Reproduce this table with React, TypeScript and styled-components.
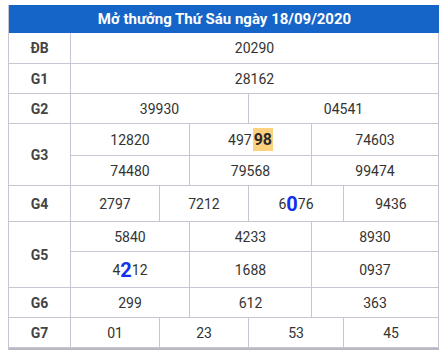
import styled, { createGlobalStyle } from 'styled-components';

const GlobalStyle = createGlobalStyle`
body {
	margin: 5px 9px 0 8px;
	background: #fff;
	font-family: Roboto, 'Liberation Sans', sans-serif;
}
`;

const ResultTable = styled.div`
display: grid;
grid-template-columns: 62px 89px 30px 59px 63px 32px 95px;
grid-template-rows: 28px 31px 30px 30px 32px 30px 36px 30px 36px 30px 30px;
width: 431px;
box-sizing: border-box;
border-left: 1px solid #c6c6d2;
border-bottom: 2px solid #b9b9c4;
`;

const Title = styled.div`
grid-column: 1 / -1;
display: flex;
align-items: center;
justify-content: center;
background: #1564c8;
color: #fff;
font-size: 15px;
font-weight: 700;
margin-right: -1px;
`;

const Cell = styled.div<{ $span: number; $rows?: number }>`
grid-column: span ${p => p.$span};
grid-row: span ${p => p.$rows ?? 1};
display: flex;
align-items: center;
justify-content: center;
box-sizing: border-box;
border-right: 1px solid #c6c6d2;
border-bottom: 1px solid #c6c6d2;
color: #333;
font-size: 14px;
`;

const Label = styled(Cell)`
font-weight: 700;
color: #444;
font-size: 14px;
`;

const Marked = styled.span`
display: inline-block;
padding: 2px 1px;
margin-left: 1px;
background: #fdd27e;
color: #2a2a2a;
font-weight: 700;
font-size: 16px;
line-height: 19px;
`;

const BigDigit = styled.span`
color: #1230f0;
font-weight: 700;
font-size: 20px;
line-height: 20px;
`;

type Row = { label: string; rows?: number; span: number; values: React.ReactNode[] };

const rows: Row[] = [
	{ label: 'ĐB', span: 6, values: ['20290'] },
	{ label: 'G1', span: 6, values: ['28162'] },
	{ label: 'G2', span: 3, values: ['39930', '04541'] },
	{ label: 'G3', rows: 2, span: 2, values: ['12820', <>497<Marked>98</Marked></>, '74603', '74480', '79568', '99474'] },
	{ label: 'G4', span: 0, values: ['2797', '7212', <>6<BigDigit>0</BigDigit>76</>, '9436'] },
	{ label: 'G5', rows: 2, span: 2, values: ['5840', '4233', '8930', <>4<BigDigit>2</BigDigit>12</>, '1688', '0937'] },
	{ label: 'G6', span: 2, values: ['299', '612', '363'] },
	{ label: 'G7', span: 0, values: ['01', '23', '53', '45'] },
];

// G4 and G7 use four uneven cells: 1 + 2 + 2 + 1 columns
const fourSpans = [1, 2, 2, 1];

export default function App() {
	return (
		<>
			<GlobalStyle />
			<ResultTable>
				<Title>Mở thưởng Thứ Sáu ngày 18/09/2020</Title>
				{rows.map(row => [
					<Label key={row.label} $span={1} $rows={row.rows}>{row.label}</Label>,
					...row.values.map((v, i) => (
						<Cell key={row.label + i} $span={row.span || fourSpans[i]}>{v}</Cell>
					)),
				])}
			</ResultTable>
		</>
	);
}
